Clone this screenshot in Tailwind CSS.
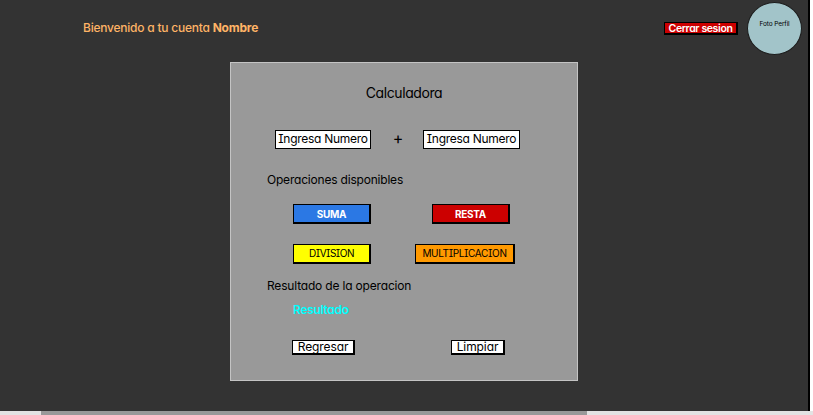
<!DOCTYPE html>
<html lang="es">
<head>
<meta charset="utf-8">
<title>Calculadora</title>
<script src="https://cdn.jsdelivr.net/npm/@tailwindcss/browser@4"></script>
</head>
<body class="h-[415px] w-[813px] overflow-hidden bg-white font-['Inter','Open_Sans',sans-serif] text-black [font-feature-settings:'cv11','cv08']">
<div class="flex h-[411px] w-[810px] flex-col border-r-2 border-black bg-[#333333]">
  <header class="flex h-[62px] shrink-0 items-start pl-[83px] pr-[6px]">
    <p class="mt-[18px] whitespace-nowrap text-[12px] font-medium leading-[20px] tracking-[-0.23px] text-[#ffb366]">Bienvenido a tu cuenta <b class="tracking-[-0.2px]">Nombre</b></p>
    <button class="ml-auto mt-[22px] flex h-[13px] w-[74px] justify-center whitespace-nowrap border border-r-2 border-b-2 border-black bg-[#cc0000] text-[10.5px] font-semibold leading-[12px] tracking-[-0.38px] text-white">Cerrar sesion</button>
    <div class="ml-[9px] mt-[2px] h-[53px] w-[55px] rounded-[50%] border border-[#1c1c1c] bg-[#a2c4c9] pt-[15px] text-center text-[6.5px] leading-[12px] tracking-[-0.1px]">Foto Perfil</div>
  </header>
  <main class="ml-[230px] flex h-[319px] w-[348px] flex-col border border-[#c4c4c4] bg-[#999999]">
    <h1 class="mt-[20px] text-center text-[14px] leading-[20px] tracking-[-0.4px]">Calculadora</h1>
    <div class="ml-[44px] mt-[27px] flex items-start tracking-[-0.28px]">
      <div class="h-[19px] w-[96px] whitespace-nowrap border border-black bg-white text-center text-[12px] leading-[16px]">Ingresa Numero</div>
      <span class="w-[52px] pl-[2px] text-center text-[16px] leading-[17px]">+</span>
      <div class="h-[19px] w-[97px] whitespace-nowrap border border-black bg-white text-center text-[12px] leading-[16px]">Ingresa Numero</div>
    </div>
    <h2 class="ml-[36px] mt-[21px] text-[12px] leading-[20px] tracking-[-0.2px]">Operaciones disponibles</h2>
    <div class="ml-[62px] mt-[14px] grid w-[222px] grid-cols-[78px_100px] items-center justify-between gap-y-[20px] text-[10px]">
      <button class="h-[20px] w-[78px] border border-r-2 border-b-2 border-black bg-[#2b78e4] pt-px font-bold leading-[17px] tracking-[-0.3px] text-white">SUMA</button>
      <button class="ml-[17px] h-[20px] w-[78px] border border-r-2 border-b-2 border-black bg-[#cc0000] pt-px font-bold leading-[17px] tracking-[-0.3px] text-white">RESTA</button>
      <button class="h-[20px] w-[78px] border border-r-2 border-b-2 border-black bg-[#ffff00] leading-[17px] tracking-[-0.5px]">DIVISION</button>
      <button class="h-[20px] w-[100px] border border-r-2 border-b-2 border-black bg-[#ff9900] leading-[17px] tracking-[-0.35px]">MULTIPLICACION</button>
    </div>
    <h2 class="ml-[36px] mt-[12px] text-[12px] leading-[20px] tracking-[-0.18px]">Resultado de la operacion</h2>
    <p class="ml-[62px] mt-[4px] text-[12px] font-semibold leading-[20px] tracking-[-0.3px] text-[#00ffff]">Resultado</p>
    <div class="ml-[61px] mt-[20px] flex w-[213px] justify-between tracking-[-0.1px]">
      <button class="h-[15px] w-[63px] border border-r-2 border-b-2 border-black bg-white text-[12px] leading-[12px]">Regresar</button>
      <button class="h-[15px] w-[54px] border border-r-2 border-b-2 border-black bg-white text-[12px] leading-[12px]">Limpiar</button>
    </div>
  </main>
</div>
<div class="flex h-[4px] w-[813px] bg-[#e3e3e3] pl-[41px]"><div class="h-full w-[546px] bg-[#999999]"></div></div>
</body>
</html>
